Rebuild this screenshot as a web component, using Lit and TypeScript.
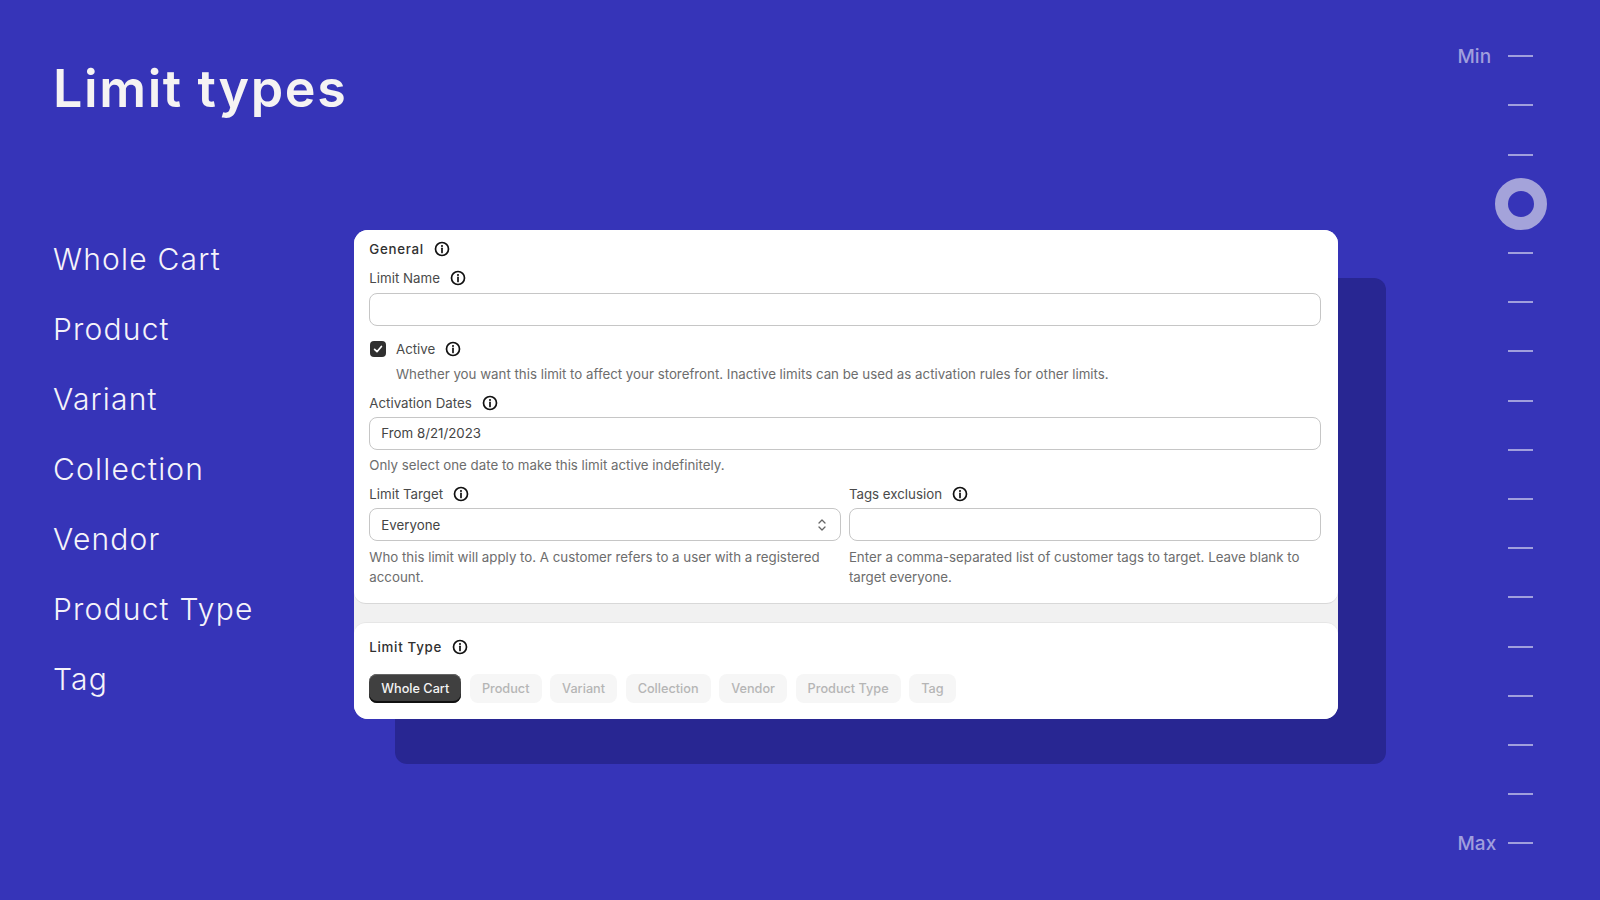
import { LitElement, html, css } from "lit";
import { customElement } from "lit/decorators.js";

const info = html`<svg class="info" viewBox="0 0 16 16" width="16" height="16" aria-hidden="true">
  <circle cx="8" cy="8" r="6.5" fill="none" stroke="#111" stroke-width="1.7"></circle>
  <circle cx="8" cy="5" r="1.05" fill="#111"></circle>
  <path d="M8 7.3v4.1" stroke="#111" stroke-width="1.7" stroke-linecap="round" fill="none"></path>
</svg>`;

const types = ["Whole Cart", "Product", "Variant", "Collection", "Vendor", "Product Type", "Tag"];

@customElement("app-root")
export class AppRoot extends LitElement {
  static styles = css`
    :host { display: block; }
    * { box-sizing: border-box; }
    .page {
      width: 1600px; height: 900px; background: #3634b8; display: flex; overflow: hidden;
      font-family: Inter, "Liberation Sans", sans-serif; color: #303030;
    }
    .left { width: 354px; flex: none; padding-left: 53px; }
    h1 {
      margin: 56.5px 0 0; font-size: 52px; line-height: 64px; font-weight: 600; color: #f5f3f3;
      letter-spacing: 1.6px; height: 64px;
    }
    .list { margin: 103px 0 0; padding: 0; list-style: none; }
    .list li {
      height: 70px; line-height: 70px; font-size: 30px; font-weight: 300; color: #f5f3fa; letter-spacing: 1.2px;
    }
    .stage { width: 984px; flex: none; padding-top: 230px; position: relative; }
    .back {
      position: absolute; left: 41px; top: 277.5px; width: 991px; height: 486.5px;
      background: #282692; border-radius: 12px;
    }
    .card {
      position: relative; background: #f1f1f1; border-radius: 14px; overflow: hidden; height: 489px;
      font-size: 13.3px; line-height: 20px;
      display: flex; flex-direction: column; gap: 17.7px;
    }
    .sec { background: #fff; padding: 0 16.7px 0 15.3px; }
    .one {
      height: 374px; padding-top: 9px; border-radius: 0 0 12px 12px;
      border-bottom: 1.5px solid #d8d8d8;
    }
    .two { flex: 1; padding-top: 14.5px; border-radius: 12px 12px 0 0; border-top: 1px solid #e6e6e6; }
    .row { display: flex; align-items: center; height: 20px; }
    .label { color: #4a4a4a; }
    .strong { font-weight: 500; color: #303030; letter-spacing: 0.7px; }
    .info { margin-left: 10px; flex: none; }
    .m1 { margin-top: 9.2px; }
    .m2 { margin-top: 9px; }
    .input {
      height: 33.2px; border: 1.3px solid #c6c6c6; border-radius: 8px; margin-top: 4.5px;
      padding: 0 11px; display: flex; align-items: center; color: #444; justify-content: space-between;
      background: #fff;
    }
    .input.tight { margin-top: 3.6px; }
    .input.sel { padding-right: 12px; margin-top: 4px; }
    .help { color: #6d6d6d; margin-top: 5.2px; }
    .help.after { margin-top: 5.4px; }
    .help.rows { line-height: 20.5px; margin-top: 5.4px; }
    .active { margin-top: 13.2px; }
    .check {
      width: 16.5px; height: 16.5px; border-radius: 4px; background: #303030; margin: 0 9.5px 0 0.7px;
      display: flex; align-items: center; justify-content: center; flex: none;
    }
    .indent { padding-left: 26.7px; }
    .cols { display: grid; grid-template-columns: 471.4px 472.4px; column-gap: 8.2px; margin-top: 8.5px; }
    .btns { display: flex; gap: 8.6px; margin-top: 16.5px; }
    .btn {
      height: 29px; border-radius: 8px; padding: 2px 12px 0; display: flex; align-items: center;
      background: #f6f6f6; color: #b5b5b5; font-weight: 500; font-size: 12.7px;
    }
    .btn.on {
      background: #404040; color: #f4f4f4;
      box-shadow: inset 0 -2px 0 #111, inset 0 1px 0 #666;
    }
    .scale {
      flex: 1; padding: 31.7px 67px 0 0; display: flex; flex-direction: column; align-items: flex-end;
    }
    .tick-row { height: 49.2px; display: flex; align-items: center; flex: none; color: #a09fdd; font-size: 19px; font-weight: 500; }
    .mark { width: 50.5px; }
    .tick { width: 25px; height: 2px; background: #a09fdd; }
    .knob {
      width: 52px; height: 52px; border-radius: 50%; border: 13.5px solid #a4a3da; margin: 0 -13.5px; flex: none;
    }
  `;

  render() {
    const ticks = Array.from({ length: 17 }, (_, i) => i);
    return html`<div class="page">
      <div class="left">
        <h1>Limit types</h1>
        <ul class="list">${types.map((t) => html`<li>${t}</li>`)}</ul>
      </div>
      <div class="stage">
        <div class="back"></div>
        <div class="card">
          <div class="sec one">
            <div class="row strong">General${info}</div>
            <div class="row label m1">Limit Name${info}</div>
            <div class="input"></div>
            <div class="row label active">
              <span class="check"><svg viewBox="0 0 12 12" width="12" height="12"><path d="M2.6 6.3 5 8.7l4.4-5.2" fill="none" stroke="#fff" stroke-width="1.7" stroke-linecap="round" stroke-linejoin="round"></path></svg></span>
              Active${info}
            </div>
            <div class="help indent">Whether you want this limit to affect your storefront. Inactive limits can be used as activation rules for other limits.</div>
            <div class="row label m2">Activation Dates${info}</div>
            <div class="input tight">From 8/21/2023</div>
            <div class="help after">Only select one date to make this limit active indefinitely.</div>
            <div class="cols">
              <div>
                <div class="row label">Limit Target${info}</div>
                <div class="input sel">Everyone
                  <svg viewBox="0 0 12 18" width="12" height="18"><path d="M3 7l3-3 3 3M3 11l3 3 3-3" fill="none" stroke="#666" stroke-width="1.3" stroke-linecap="round" stroke-linejoin="round"></path></svg>
                </div>
                <div class="help rows">Who this limit will apply to. A customer refers to a user with a registered account.</div>
              </div>
              <div>
                <div class="row label">Tags exclusion${info}</div>
                <div class="input sel"></div>
                <div class="help rows">Enter a comma-separated list of customer tags to target. Leave blank to target everyone.</div>
              </div>
            </div>
          </div>
          <div class="sec two">
            <div class="row strong">Limit Type${info}</div>
            <div class="btns">${types.map((t, i) => html`<div class="btn ${i === 0 ? "on" : ""}">${t}</div>`)}</div>
          </div>
        </div>
      </div>
      <div class="scale">
        ${ticks.map((i) => html`<div class="tick-row">
          ${i === 0 ? html`<span class="mark">Min</span>` : i === 16 ? html`<span class="mark">Max</span>` : ""}
          ${i === 3 ? html`<div class="knob"></div>` : html`<div class="tick"></div>`}
        </div>`)}
      </div>
    </div>`;
  }
}
